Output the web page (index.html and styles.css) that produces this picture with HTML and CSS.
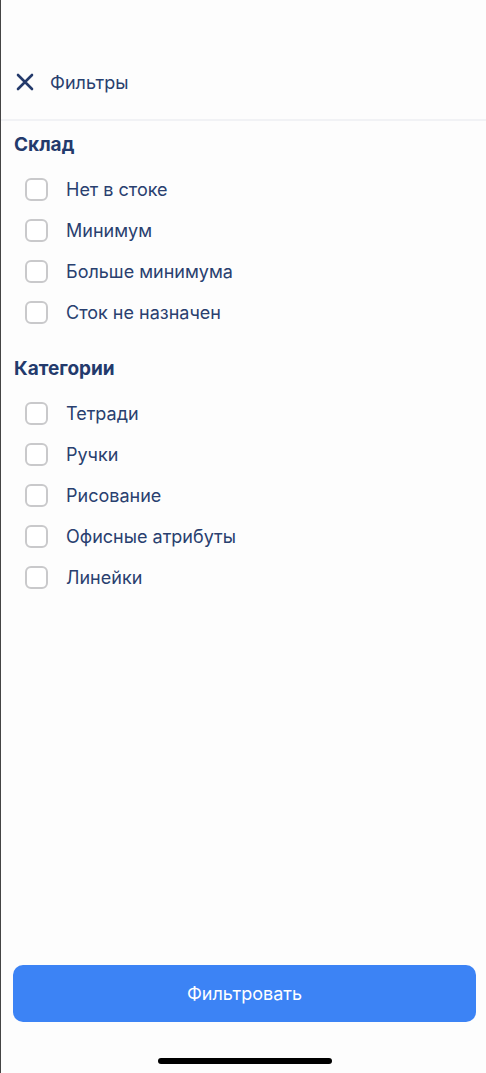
FILE: index.html
```html
<!DOCTYPE html>
<html lang="ru">
<head>
    <meta charset="UTF-8">
    <meta name="viewport" content="width=device-width, initial-scale=1.0">
    <title>Фильтры</title>
    <link rel="stylesheet" href="styles.css">
</head>
<body>
    <div class="screen">
        <div class="header">
            <button class="close-btn" aria-label="Закрыть">
                <svg width="18" height="18" viewBox="0 0 18 18">
                    <path d="M2 2 L16 16 M16 2 L2 16" stroke="#243a6b" stroke-width="2.6" stroke-linecap="round"/>
                </svg>
            </button>
            <span class="header-title">Фильтры</span>
        </div>

        <div class="filters">
            <div class="group">
                <h2>Склад</h2>
                <label class="option"><input type="checkbox"><span>Нет в стоке</span></label>
                <label class="option"><input type="checkbox"><span>Минимум</span></label>
                <label class="option"><input type="checkbox"><span>Больше минимума</span></label>
                <label class="option"><input type="checkbox"><span>Сток не назначен</span></label>
            </div>

            <div class="group">
                <h2>Категории</h2>
                <label class="option"><input type="checkbox"><span>Тетради</span></label>
                <label class="option"><input type="checkbox"><span>Ручки</span></label>
                <label class="option"><input type="checkbox"><span>Рисование</span></label>
                <label class="option"><input type="checkbox"><span>Офисные атрибуты</span></label>
                <label class="option"><input type="checkbox"><span>Линейки</span></label>
            </div>
        </div>

        <div class="footer">
            <button class="submit-btn">Фильтровать</button>
            <div class="home-bar"></div>
        </div>
    </div>
</body>
</html>
```

FILE: styles.css
```css
* {
    box-sizing: border-box;
}

body {
    margin: 0;
    font-family: Inter, "Noto Sans", sans-serif;
    background-color: #fdfdfd;
    color: #29406f;
}

.screen {
    height: 1073px;
    border-left: 1px solid #444;
    display: flex;
    flex-direction: column;
}

.header {
    height: 121px;
    padding: 45px 0 0 15px;
    display: flex;
    align-items: center;
    gap: 16px;
    border-bottom: 2px solid #f1f2f5;
}

.close-btn {
    background: none;
    border: none;
    padding: 0;
    width: 18px;
    height: 18px;
    display: flex;
}

.header-title {
    font-size: 18px;
    color: #29406f;
}

.filters {
    flex: 1;
    padding: 12px 0 0 13px;
}

.group {
    margin-bottom: 24px;
}

h2 {
    margin: 0 0 12px;
    font-size: 19px;
    font-weight: 700;
    color: #233a6c;
    line-height: 24px;
}

.option {
    display: flex;
    align-items: center;
    gap: 18px;
    height: 41px;
    padding-left: 11px;
    font-size: 18px;
}

.option input {
    appearance: none;
    margin: 0;
    width: 23px;
    height: 23px;
    border: 2px solid #c9c9cb;
    border-radius: 6px;
    background: #fff;
}

.footer {
    padding: 0 10px 9px 12px;
    display: flex;
    flex-direction: column;
    align-items: center;
}

.submit-btn {
    width: 100%;
    height: 57px;
    background-color: #3c83f5;
    color: #fff;
    border: none;
    border-radius: 10px;
    font-family: inherit;
    font-size: 18px;
}

.home-bar {
    margin-top: 36px;
    width: 174px;
    height: 6px;
    border-radius: 3px;
    background-color: #000;
}
```
